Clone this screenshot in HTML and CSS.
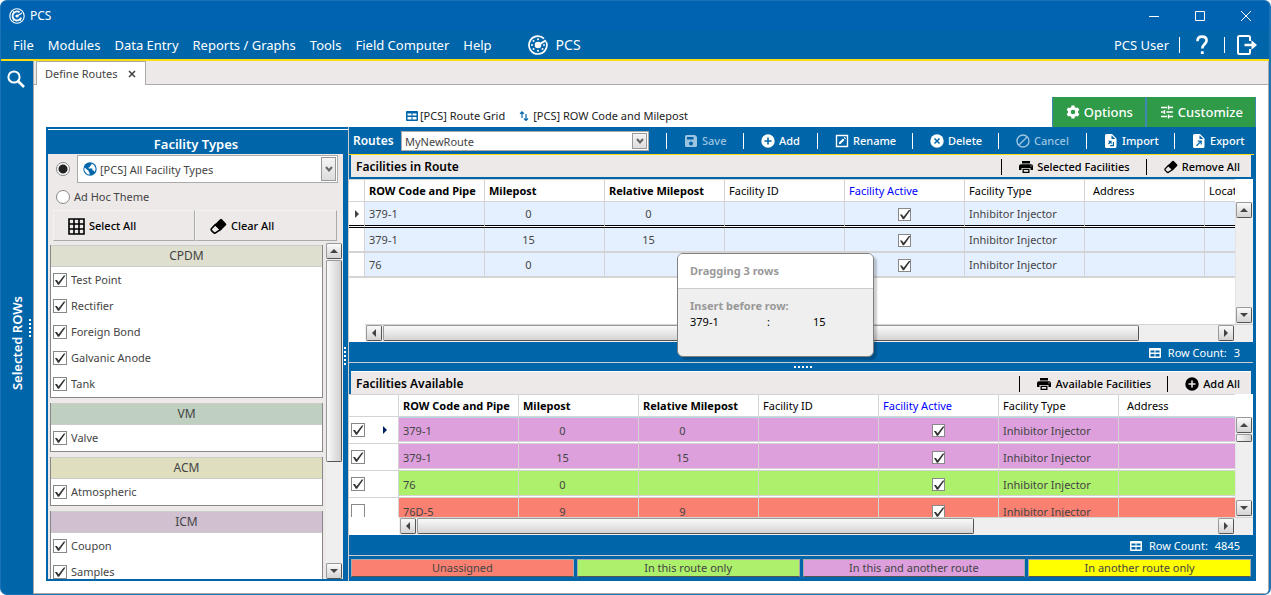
FILE: index.html
```html
<!DOCTYPE html>
<html lang="en">
<head>
    <meta charset="UTF-8">
    <meta name="viewport" content="width=device-width, initial-scale=1.0">
    <title>PCS - Define Routes</title>

    <link rel="stylesheet" href="styles.css">
</head>
<body>
    <!-- shared icons -->
    <svg class="sprite" aria-hidden="true">
        <symbol id="i-grid" viewBox="0 0 12 10"><path fill="currentColor" fill-rule="evenodd" d="M1 0h10a1 1 0 0 1 1 1v8a1 1 0 0 1-1 1H1a1 1 0 0 1-1-1V1a1 1 0 0 1 1-1zM1.500 2.500v2h4v-2zM6.500 2.500v2h4v-2zM1.500 6v2.500h4V6zM6.500 6v2.500h4V6z"/></symbol>
        <symbol id="i-eraser" viewBox="0 0 16 16"><path fill="currentColor" d="M9.500 1.200a1.200 1.200 0 0 1 1.700 0l3.800 3.900a1.200 1.200 0 0 1 0 1.700L10 11.700 4.500 6.200z"/><path fill="none" stroke="currentColor" stroke-width="1.500" d="M5 6.200 1.500 9.900a1.500 1.500 0 0 0 0 2l1.900 1.900c.6.6 1.500.6 2.100 0L9.800 11z"/></symbol>
        <symbol id="i-print" viewBox="0 0 14 12"><path fill="currentColor" fill-rule="evenodd" d="M3 0h8v2.500H3zM2 3.200h10a2 2 0 0 1 2 2V9h-2.500V7h-9v2H0V5.200a2 2 0 0 1 2-2zM11.500 4.500v1h1v-1zM3.500 7.800h7V12h-7zM4.800 9v1.800h4.400V9z"/></symbol>
        <symbol id="i-plus" viewBox="0 0 14 14"><path fill="currentColor" fill-rule="evenodd" d="M7 .3a6.700 6.700 0 1 1 0 13.400A6.700 6.700 0 0 1 7 .3zM6.200 3.500v2.700H3.500v1.600h2.700v2.700h1.600V7.800h2.700V6.200H7.800V3.500z"/></symbol>
        <symbol id="i-file-in" viewBox="0 0 12 14"><path fill="currentColor" fill-rule="evenodd" d="M1.500 0H7l4.500 4.500v8A1.500 1.500 0 0 1 10 14H1.500A1.500 1.500 0 0 1 0 12.500v-11A1.500 1.500 0 0 1 1.500 0zM6.500 1.200V5h3.800zM3 6.800l1.300 1.300L3 9.400l1 1 1.300-1.300 1.300 1.300V6.800zM5 11v1.200h4V8H7.800v3z"/></symbol>
        <symbol id="i-file-out" viewBox="0 0 12 14"><path fill="currentColor" fill-rule="evenodd" d="M1.500 0H7l4.500 4.500v8A1.500 1.500 0 0 1 10 14H1.500A1.500 1.500 0 0 1 0 12.500v-11A1.500 1.500 0 0 1 1.500 0zM6.500 1.200V5h3.800zM4.800 6.500v1.200h2L3 11.200l1 1 3.600-3.600v2h1.200V6.500z"/></symbol>
    </svg>

    <div class="window">
        <header class="titlebar">
            <svg class="app-icon" viewBox="0 0 16 16" fill="none" stroke="#fff"><circle cx="8" cy="8" r="7.200" stroke-width="1.100"/><path stroke-width="1.800" d="M12.200 9.600A4.500 4.500 0 1 1 10.600 4.300"/><circle cx="8" cy="8" r="1.600" fill="#fff" stroke="none"/><path stroke-width="1.200" d="m8 8 5-3M5.500 5 4 3.500M5.500 11 4 12.500M10.500 11l1.500 1.500"/></svg>
            <span class="app-name">PCS</span>
            <button class="win-button" aria-label="Minimize"><svg viewBox="0 0 12 12"><path d="M1 6.500h10"/></svg></button>
            <button class="win-button" aria-label="Maximize"><svg viewBox="0 0 12 12"><path d="M1.500 1.500h9v9h-9z"/></svg></button>
            <button class="win-button" aria-label="Close"><svg viewBox="0 0 12 12"><path d="m1 1 10 10M11 1 1 11"/></svg></button>
        </header>

        <nav class="menubar">
            <a href="#">File</a>
            <a href="#">Modules</a>
            <a href="#">Data Entry</a>
            <a href="#">Reports / Graphs</a>
            <a href="#">Tools</a>
            <a href="#">Field Computer</a>
            <a href="#">Help</a>
            <a href="#" class="brand">
                <svg viewBox="0 0 20 20"><path fill="none" stroke="#fff" stroke-width="1.700" d="M18.200 6.800A8.900 8.900 0 1 1 16 3.600"/><path stroke="#fff" stroke-width="2" d="m10 10 8-4.600"/><circle cx="10" cy="10" r="3.300" fill="#fff"/><g fill="#fff"><circle cx="10" cy="4.200" r="1"/><circle cx="5.500" cy="6" r="1"/><circle cx="4" cy="10" r="1"/><circle cx="5.500" cy="14" r="1"/><circle cx="10" cy="15.800" r="1"/><circle cx="14.500" cy="14" r="1"/><circle cx="16" cy="10" r=".9"/></g></svg>
                PCS
            </a>
            <span class="user">PCS User</span>
            <button class="menu-icon" aria-label="Help"><svg viewBox="0 0 12 20"><path fill="none" stroke="#fff" stroke-width="2.600" d="M1.500 6.200C1.500 3 3.300 1.600 6 1.600s4.600 1.500 4.600 4c0 3.300-4.300 3.700-4.300 8"/><path fill="#fff" d="M4.900 16.200h2.800V19H4.900z"/></svg></button>
            <button class="menu-icon" aria-label="Log out"><svg class="wide" viewBox="0 0 20 20"><path fill="none" stroke="#fff" stroke-width="2" d="M13 6V2.500A1.500 1.500 0 0 0 11.500 1h-9A1.500 1.500 0 0 0 1 2.500v15A1.500 1.500 0 0 0 2.500 19h9a1.500 1.500 0 0 0 1.500-1.500V14"/><path fill="#fff" d="M7.500 8.700h7V5.300L20 10l-5.500 4.700v-3.400h-7z"/></svg></button>
        </nav>

        <div class="workspace">
            <aside class="rail">
                <button class="rail-search" aria-label="Search"><svg viewBox="0 0 18 18" fill="none" stroke="#fff"><circle cx="7" cy="7" r="5.600" stroke-width="2"/><path stroke-width="2.600" d="m11 11 6 6"/></svg></button>
                <span class="rail-label">Selected ROWs</span>
                <span class="dots dots-v rail-dots"></span>
            </aside>

            <main class="document">
                <div class="tabs">
                    <div class="tab">Define Routes <button aria-label="Close tab"><svg viewBox="0 0 8 8"><path fill="none" stroke="#444" stroke-width="1.600" d="m1 1 6 6M7 1 1 7"/></svg></button></div>
                </div>

                <div class="page">
                    <div class="page-top">
                        <a href="#" class="layout-link"><svg class="i12"><use href="#i-grid"/></svg>[PCS] Route Grid</a>
                        <a href="#" class="layout-link sort"><svg class="i10" viewBox="0 0 10 12"><path fill="none" stroke="#0065a9" stroke-width="1.200" d="M3 8V2M1 3.800l2-2 2 2M7 4v6.500M5 8.500l2 2 2-2"/></svg>[PCS] ROW Code and Milepost</a>
                        <div class="page-buttons">
                            <button class="green"><svg viewBox="0 0 14 14"><path fill="#fff" fill-rule="evenodd" d="M5.500.5h3l.4 1.800 1.200.7 1.800-.6 1.500 2.600L12 6.300v1.400l1.400 1.300-1.500 2.600-1.800-.6-1.200.7-.4 1.800h-3l-.4-1.800-1.200-.7-1.800.6L.6 9 2 7.700V6.300L.6 5l1.500-2.600 1.800.6 1.200-.7zM7 4.700a2.300 2.300 0 1 0 0 4.600 2.300 2.300 0 0 0 0-4.600z"/></svg>Options</button>
                            <button class="green"><svg viewBox="0 0 14 14"><path fill="none" stroke="#fff" stroke-width="1.400" d="M1 2.500h6M9 2.500h4M8.500.5v4M1 7h3M6.500 7H13M4.500 5v4M1 11.500h6M9 11.500h4M8.500 9.500v4"/></svg>Customize</button>
                        </div>
                    </div>

                    <div class="panels">
                        <section class="types">
                            <h2>Facility Types</h2>
                            <div class="types-body">
                                <div class="theme-row">
                                    <input type="radio" name="theme" id="theme-all" aria-label="Facility type list" checked>
                                    <div class="combo combo-types">
                                        <svg class="globe" viewBox="0 0 14 14"><circle cx="7" cy="7" r="6.700" fill="#0065a9"/><path fill="#fff" d="M1.500 5.500 5.800 9v1l.8 1v1.700A5.800 5.800 0 0 1 1.500 5.500zM8.500 1.500v1.200L7 4v1.200H5.600v1.300h3.800v2h1.400l.8 1.600A5.800 5.800 0 0 0 8.500 1.500z"/></svg>
                                        <select aria-label="Facility types"><option>[PCS] All Facility Types</option></select>
                                        <span class="combo-arrow"><svg viewBox="0 0 8 8"><path d="m1 2 3 3.500L7 2"/></svg></span>
                                    </div>
                                </div>
                                <div class="theme-row">
                                    <input type="radio" name="theme" id="theme-adhoc">
                                    <label for="theme-adhoc">Ad Hoc Theme</label>
                                </div>
                                <div class="pick-row">
                                    <button><svg viewBox="0 0 17 17"><path fill="none" stroke="#000" stroke-width="1.600" d="M1 1h15v15H1zM1 6h15M1 11h15M6 1v15M11 1v15"/></svg>Select All</button>
                                    <button><svg viewBox="0 0 16 16"><use href="#i-eraser"/></svg>Clear All</button>
                                </div>
                                <div class="types-scroll">
                                    <div class="groups">
                                        <fieldset class="group cpdm">
                                            <legend>CPDM</legend>
                                            <label><input type="checkbox" checked>Test Point</label>
                                            <label><input type="checkbox" checked>Rectifier</label>
                                            <label><input type="checkbox" checked>Foreign Bond</label>
                                            <label><input type="checkbox" checked>Galvanic Anode</label>
                                            <label><input type="checkbox" checked>Tank</label>
                                        </fieldset>
                                        <fieldset class="group vm">
                                            <legend>VM</legend>
                                            <label><input type="checkbox" checked>Valve</label>
                                        </fieldset>
                                        <fieldset class="group acm">
                                            <legend>ACM</legend>
                                            <label><input type="checkbox" checked>Atmospheric</label>
                                        </fieldset>
                                        <fieldset class="group icm">
                                            <legend>ICM</legend>
                                            <label><input type="checkbox" checked>Coupon</label>
                                            <label><input type="checkbox" checked>Samples</label>
                                        </fieldset>
                                    </div>
                                    <div class="vscroll">
                                        <button class="sb up" aria-label="Scroll up"></button>
                                        <span class="thumb thumb-types"></span>
                                        <button class="sb down" aria-label="Scroll down"></button>
                                    </div>
                                </div>
                            </div>
                            <span class="dots dots-v types-dots"></span>
                        </section>

                        <section class="routes">
                            <div class="toolbar">
                                <label for="route">Routes</label>
                                <div class="combo combo-route">
                                    <select id="route"><option>MyNewRoute</option></select>
                                    <span class="combo-arrow"><svg viewBox="0 0 8 8"><path d="m1 2 3 3.500L7 2"/></svg></span>
                                </div>
                                <div class="tools">
                                    <button disabled><svg viewBox="0 0 14 14"><path fill="currentColor" fill-rule="evenodd" d="M2.500 1H11l2 2v8.500a1.500 1.500 0 0 1-1.500 1.500h-9A1.500 1.500 0 0 1 1 11.500v-9A1.500 1.500 0 0 1 2.500 1zM3 3v2.500h6.500V3zM7 7.500a2 2 0 1 0 0 4 2 2 0 0 0 0-4z"/></svg>Save</button>
                                    <button><svg><use href="#i-plus"/></svg>Add</button>
                                    <button><svg viewBox="0 0 14 14"><path fill="none" stroke="currentColor" stroke-width="1.400" d="M1.500 1.500h11v11h-11z"/><path fill="currentColor" d="m4 8.500 4-4L9.500 6l-4 4H4zM8.700 3.800l.8-.8L11 4.500l-.8.8z"/></svg>Rename</button>
                                    <button><svg viewBox="0 0 14 14"><circle cx="7" cy="7" r="6.700" fill="currentColor"/><path fill="none" stroke="#0065a9" stroke-width="1.500" d="m4.500 4.500 5 5M9.500 4.500l-5 5"/></svg>Delete</button>
                                    <button disabled><svg viewBox="0 0 14 14"><path fill="none" stroke="currentColor" stroke-width="1.400" d="M7 1a6 6 0 1 1 0 12A6 6 0 0 1 7 1zM11 3 3 11"/></svg>Cancel</button>
                                    <button><svg><use href="#i-file-in"/></svg>Import</button>
                                    <button><svg><use href="#i-file-out"/></svg>Export</button>
                                </div>
                            </div>

                            <div class="grid-panel in-route">
                                <div class="caption">
                                    <h3>Facilities in Route</h3>
                                    <button><svg><use href="#i-print"/></svg>Selected Facilities</button>
                                    <button><svg><use href="#i-eraser"/></svg>Remove All</button>
                                </div>
                                <div class="grid">
                                    <div class="grid-view">
                                        <table>
                                            <colgroup><col class="c-mark"><col span="8"></colgroup>
                                            <thead>
                                                <tr><th></th><th class="key">ROW Code and Pipe</th><th class="key">Milepost</th><th class="key">Relative Milepost</th><th>Facility ID</th><th class="active">Facility Active</th><th>Facility Type</th><th class="address">Address</th><th>Location</th></tr>
                                            </thead>
                                            <tbody>
                                                <tr class="drop-after"><td class="mark"><span class="caret"></span></td><td>379-1</td><td class="num">0</td><td class="num">0</td><td></td><td class="check"><input type="checkbox" aria-label="Facility active" checked></td><td>Inhibitor Injector</td><td></td><td></td></tr>
                                                <tr><td class="mark"></td><td>379-1</td><td class="num">15</td><td class="num">15</td><td></td><td class="check"><input type="checkbox" aria-label="Facility active" checked></td><td>Inhibitor Injector</td><td></td><td></td></tr>
                                                <tr><td class="mark"></td><td>76</td><td class="num">0</td><td class="num"></td><td></td><td class="check"><input type="checkbox" aria-label="Facility active" checked></td><td>Inhibitor Injector</td><td></td><td></td></tr>
                                            </tbody>
                                        </table>
                                    </div>
                                    <div class="vscroll">
                                        <button class="sb up" aria-label="Scroll up"></button>
                                        <button class="sb down" aria-label="Scroll down"></button>
                                    </div>
                                    <div class="hscroll">
                                        <button class="sb left" aria-label="Scroll left"></button>
                                        <span class="thumb thumb-route"></span>
                                        <button class="sb right" aria-label="Scroll right"></button>
                                    </div>
                                </div>
                                <div class="count"><svg><use href="#i-grid"/></svg>Row Count:<span>3</span></div>

                                <div class="drag-tip" role="tooltip">
                                    <div class="drag-title">Dragging 3 rows</div>
                                    <div class="drag-body">
                                        <strong>Insert before row:</strong>
                                        <div class="drag-target"><span>379-1</span><span>:</span><span>15</span></div>
                                    </div>
                                </div>
                            </div>

                            <div class="splitter"><span class="dots"></span></div>

                            <div class="grid-panel available">
                                <div class="caption">
                                    <h3>Facilities Available</h3>
                                    <button><svg><use href="#i-print"/></svg>Available Facilities</button>
                                    <button><svg><use href="#i-plus"/></svg>Add All</button>
                                </div>
                                <div class="grid">
                                    <div class="grid-view">
                                        <table>
                                            <colgroup><col class="c-mark"><col span="7"></colgroup>
                                            <thead>
                                                <tr><th></th><th class="key">ROW Code and Pipe</th><th class="key">Milepost</th><th class="key">Relative Milepost</th><th>Facility ID</th><th class="active">Facility Active</th><th>Facility Type</th><th class="address">Address</th></tr>
                                            </thead>
                                            <tbody>
                                                <tr class="both current"><td class="mark"><input type="checkbox" aria-label="Select row" checked><span class="caret"></span></td><td>379-1</td><td class="num">0</td><td class="num">0</td><td></td><td class="check"><input type="checkbox" aria-label="Facility active" checked></td><td>Inhibitor Injector</td><td></td></tr>
                                                <tr class="both"><td class="mark"><input type="checkbox" aria-label="Select row" checked></td><td>379-1</td><td class="num">15</td><td class="num">15</td><td></td><td class="check"><input type="checkbox" aria-label="Facility active" checked></td><td>Inhibitor Injector</td><td></td></tr>
                                                <tr class="this"><td class="mark"><input type="checkbox" aria-label="Select row" checked></td><td>76</td><td class="num">0</td><td class="num"></td><td></td><td class="check"><input type="checkbox" aria-label="Facility active" checked></td><td>Inhibitor Injector</td><td></td></tr>
                                                <tr class="none"><td class="mark"><input type="checkbox" aria-label="Select row"></td><td>76D-5</td><td class="num">9</td><td class="num">9</td><td></td><td class="check"><input type="checkbox" aria-label="Facility active" checked></td><td>Inhibitor Injector</td><td></td></tr>
                                            </tbody>
                                        </table>
                                    </div>
                                    <div class="vscroll">
                                        <button class="sb up" aria-label="Scroll up"></button>
                                        <span class="thumb thumb-short"></span>
                                        <button class="sb down" aria-label="Scroll down"></button>
                                    </div>
                                    <div class="hscroll">
                                        <button class="sb left" aria-label="Scroll left"></button>
                                        <span class="thumb thumb-available"></span>
                                        <button class="sb right" aria-label="Scroll right"></button>
                                    </div>
                                </div>
                                <div class="count"><svg><use href="#i-grid"/></svg>Row Count:<span>4845</span></div>
                            </div>

                            <div class="key-row">
                                <span class="none">Unassigned</span>
                                <span class="this">In this route only</span>
                                <span class="both">In this and another route</span>
                                <span class="other">In another route only</span>
                            </div>
                        </section>
                    </div>
                </div>
            </main>
        </div>
    </div>
</body>
</html>
```
FILE: styles.css
```css
* {
    box-sizing: border-box;
}

body {
    margin: 0;
    background: #fff;
    color: #444;
    font-family: "Noto Sans", "Open Sans", sans-serif;
    font-size: 11px;
    line-height: 16px;
}

button, select, input {
    font: inherit;
    color: inherit;
    margin: 0;
}

button {
    display: flex;
    align-items: center;
    background: none;
    border: 0;
    padding: 0;
    white-space: nowrap;
}

a {
    color: inherit;
    text-decoration: none;
}

h2, h3 {
    margin: 0;
    font-weight: 600;
}

svg {
    flex: none;
}

.sprite {
    display: none;
}

.window {
    display: flex;
    flex-direction: column;
    height: 100vh;
    background: #0065a9;
    border: 1px solid #1b72b4;
    border-right-width: 2px;
    border-radius: 7px;
    overflow: hidden;
}

/* title bar and menu */
.titlebar {
    display: flex;
    align-items: center;
    flex: none;
    height: 29px;
    padding-left: 8px;
    background: #0063b1;
    color: #fff;
    font-size: 12px;
}

.app-icon {
    width: 16px;
    height: 16px;
}

.app-name {
    margin: 0 auto 0 5px;
}

.win-button {
    justify-content: center;
    width: 46px;
    height: 29px;
}

.win-button svg {
    width: 12px;
    height: 12px;
    fill: none;
    stroke: #fff;
}

.menubar {
    display: flex;
    align-items: center;
    flex: none;
    height: 31px;
    padding: 1px 12px 0;
    gap: 14px;
    border-bottom: 2px solid #fbdd12;
    color: #fff;
    font-size: 13px;
    white-space: nowrap;
}

.brand {
    display: flex;
    align-items: center;
    gap: 8px;
    margin-left: 22px;
    font-size: 14px;
}

.brand svg {
    width: 20px;
    height: 20px;
}

.user {
    margin-left: auto;
}

.menu-icon {
    height: 16px;
    padding-left: 16px;
    border-left: 1px solid #fff;
    margin-left: -4px;
}

.menu-icon svg {
    width: 12px;
    height: 20px;
}

.menu-icon:last-child {
    padding-left: 12px;
    margin-left: 2px;
}

.menu-icon .wide {
    width: 20px;
}

/* left rail */
.workspace {
    display: flex;
    flex: 1;
    min-height: 0;
}

.rail {
    display: flex;
    flex-direction: column;
    align-items: center;
    justify-content: center;
    position: relative;
    flex: none;
    width: 32px;
    color: #fff;
}

.rail-search {
    position: absolute;
    top: 9px;
    left: 6px;
}

.rail-search svg {
    width: 18px;
    height: 18px;
}

.rail-label {
    padding-bottom: 32px;
    writing-mode: vertical-rl;
    transform: rotate(180deg);
    font-size: 13px;
    font-weight: 600;
}

.dots {
    width: 18px;
    height: 2px;
    background: repeating-linear-gradient(90deg, #fff 0 2px, transparent 2px 4px);
}

.dots-v {
    position: absolute;
    width: 2px;
    height: 18px;
    background: repeating-linear-gradient(#fff 0 2px, transparent 2px 4px);
}

.rail-dots {
    right: 2px;
}

/* document area */
.document {
    display: flex;
    flex-direction: column;
    flex: 1;
    min-width: 0;
    border: solid #aaa;
    border-width: 0 1px 1px;
    background: #fff;
}

.tabs {
    flex: none;
    height: 24px;
    padding-left: 2px;
    background: #ece9e8;
    border-bottom: 1px solid #aaa;
}

.tab {
    display: flex;
    align-items: center;
    justify-content: space-between;
    width: 110px;
    height: 24px;
    padding: 0 9px 0 8px;
    background: #fff;
    border: solid #aaa;
    border-width: 1px 1px 0;
}

.tab svg {
    width: 8px;
    height: 8px;
}

.page {
    display: flex;
    flex-direction: column;
    flex: 1;
    min-height: 0;
    padding: 12px 12px 12px 12px;
}

.page-top {
    display: flex;
    flex: none;
    height: 30px;
    padding: 11px 0 0 360px;
    color: #222;
}

.layout-link {
    display: flex;
    align-items: center;
    gap: 2px;
    height: 16px;
}

.layout-link svg {
    color: #0065a9;
}

.sort {
    margin-left: 14px;
    gap: 4px;
}

.i12 {
    width: 12px;
    height: 10px;
}

.i10 {
    width: 10px;
    height: 12px;
}

.page-buttons {
    display: flex;
    margin: -11px 0 0 auto;
}

.green {
    gap: 4px;
    height: 30px;
    padding: 0 12px 0 13px;
    background: #2f9a47;
    border: solid #3f87b5;
    border-width: 0 1px;
    color: #fff;
    font-size: 13px;
    font-weight: 500;
}

.green svg {
    width: 14px;
    height: 14px;
}

.panels {
    display: flex;
    flex: 1;
    min-height: 0;
    background: #0065a9;
}

/* facility types */
.types {
    display: flex;
    flex-direction: column;
    position: relative;
    flex: none;
    width: 302px;
    padding: 2px 0 2px 2px;
}

.types h2 {
    flex: none;
    height: 25px;
    padding-right: 4px;
    border-top: 1px solid #fff;
    color: #fff;
    font-size: 13px;
    line-height: 29px;
    text-align: center;
}

.types-body {
    display: flex;
    flex-direction: column;
    flex: 1;
    min-height: 0;
    margin-right: 5px;
    background: #ece9e8;
}

.types-dots {
    top: 220px;
    right: 2px;
}

.theme-row {
    display: flex;
    align-items: center;
    flex: none;
    gap: 7px;
    height: 29px;
    padding: 1px 5px 0 8px;
}

.theme-row + .theme-row {
    gap: 4px;
    height: 26px;
    padding-top: 1px;
}

input[type=radio] {
    appearance: none;
    flex: none;
    width: 14px;
    height: 14px;
    border: 1px solid #888;
    border-radius: 50%;
    background: #fff;
}

input[type=radio]:checked {
    background: radial-gradient(#222 4px, #fff 5px);
}

.combo {
    display: flex;
    align-items: center;
    position: relative;
    background: #fff;
    border: 1px solid #aaa;
}

.combo select {
    appearance: none;
    width: 100%;
    height: 100%;
    padding: 1px 20px 0 3px;
    border: 0;
    background: none;
}

.combo-arrow {
    display: flex;
    align-items: center;
    justify-content: center;
    position: absolute;
    top: 1px;
    right: 1px;
    bottom: 1px;
    width: 15px;
    background: linear-gradient(#f4f4f4, #ddd);
    border: 1px solid #999;
    pointer-events: none;
}

.combo-arrow svg {
    width: 8px;
    height: 8px;
    fill: none;
    stroke: #666;
    stroke-width: 2;
}

.combo-types {
    flex: 1;
    height: 28px;
    padding-left: 5px;
}

.globe {
    width: 14px;
    height: 14px;
}

.pick-row {
    display: flex;
    flex: none;
    height: 31px;
    margin: 1px 6px 0 5px;
}

.pick-row button {
    flex: 1;
    gap: 4px;
    padding: 1px 0 0 14px;
    border: 1px solid #f4f2f2;
    border-right-color: #aaa;
    border-bottom-color: #aaa;
    color: #000;
    font-weight: 500;
}

.pick-row svg {
    width: 17px;
    height: 17px;
}

.types-scroll {
    display: flex;
    flex: 1;
    min-height: 0;
    padding: 2px 0 0 2px;
}

.groups {
    flex: 1;
    padding-top: 2px;
    overflow: hidden;
}

.group {
    margin: 0 0 5px;
    padding: 0;
    border: solid #888;
    border-width: 0 1px 1px;
    background: #fff;
}

.group legend {
    float: left;
    width: 100%;
    height: 22px;
    padding: 0;
    border: solid #ccc;
    border-width: 1px 0;
    font-size: 12px;
    line-height: 20px;
    text-align: center;
}

.group label {
    display: flex;
    align-items: center;
    clear: both;
    gap: 4px;
    height: 26px;
    padding-left: 2px;
}

.cpdm legend { background: #dfdfcf; }
.vm legend { background: #bfcfc0; }
.acm legend { background: #dfdfbf; }
.icm legend { background: #d0c0d0; }

input[type=checkbox] {
    appearance: none;
    display: block;
    flex: none;
    width: 14px;
    height: 14px;
    border: 1px solid #888;
    background: #fff;
}

input[type=checkbox]:checked::before {
    content: "";
    display: block;
    width: 12px;
    height: 12px;
    background: #333;
    clip-path: polygon(8% 50%, 25% 50%, 38% 68%, 82% 12%, 96% 12%, 42% 90%, 32% 90%);
}

/* scroll bars */
.vscroll {
    display: flex;
    flex-direction: column;
    flex: none;
    width: 17px;
    margin-left: 3px;
    background: #efefef;
}

.hscroll {
    display: flex;
    gap: 1px;
    padding: 0 1px;
    background: #efefef;
    border-top: 1px solid #d4d4d4;
}

.sb, .thumb {
    flex: none;
    border: 1px solid #999;
    border-right-color: #555;
    border-bottom-color: #555;
    border-radius: 2px;
    background: linear-gradient(#fafafa, #d4d4d4);
}

.sb {
    justify-content: center;
    width: 16px;
    height: 16px;
}

.sb::before {
    content: "";
    border: 4px solid transparent;
}

.up::before {
    border-top: 0;
    border-bottom-color: #444;
}

.down::before {
    border-bottom: 0;
    border-top-color: #444;
}

.left::before {
    border-left: 0;
    border-right-color: #444;
}

.right::before {
    border-right: 0;
    border-left-color: #444;
}

.down {
    margin-top: auto;
}

.right {
    margin-left: auto;
}

.vscroll .thumb {
    width: 16px;
    margin-top: 1px;
    background: linear-gradient(90deg, #fafafa, #d0d0d0);
}

.thumb-types {
    height: 60%;
}

.thumb-short {
    height: 8px;
}

.thumb-route {
    width: 756px;
    height: 16px;
}

.thumb-available {
    width: 557px;
    height: 16px;
}

/* route toolbar */
.routes {
    display: flex;
    flex-direction: column;
    flex: 1;
    min-width: 0;
    border-left: 1px solid #ccc;
}

.toolbar {
    display: flex;
    align-items: center;
    flex: none;
    height: 28px;
    margin-right: 2px;
    padding: 1px 0 0 4px;
    border-bottom: 1px solid #fbdd12;
    color: #fff;
}

.toolbar label {
    width: 48px;
    font-size: 12px;
    font-weight: 600;
}

.combo-route {
    width: 248px;
    height: 20px;
    color: #444;
}

.tools {
    display: grid;
    grid-template-columns: 77px 74px 95px 86px 88px 88px 80px;
    margin-left: auto;
}

.tools button {
    gap: 4px;
    height: 16px;
    padding-left: 17px;
    border-left: 1px solid #fff;
    font-weight: 500;
}

.tools button:disabled {
    color: #9cc4e0;
}

.tools svg, .caption svg {
    width: 14px;
    height: 14px;
}

/* grids */
.grid-panel {
    display: flex;
    flex-direction: column;
    position: relative;
    min-height: 0;
    margin-right: 3px;
}

.in-route {
    flex: 1 1 208px;
}

.available {
    flex: 1 1 185px;
}

.caption {
    display: flex;
    align-items: center;
    flex: none;
    height: 24px;
    margin: 0 2px;
    padding: 1px 11px 0 5px;
    background: #ece9e8;
    border-bottom: 2px solid #0065a9;
    color: #000;
}

.caption h3 {
    margin-right: auto;
    font-size: 12px;
}

.caption button {
    gap: 4px;
    height: 16px;
    padding-left: 17px;
    border-left: 1px solid #000;
    margin-left: 16px;
    font-weight: 500;
}

.available .caption {
    height: 23px;
    border-bottom: 0;
    border-top: 1px solid #fff;
}

.grid {
    display: grid;
    grid-template-columns: minmax(0, 1fr) 18px;
    grid-template-rows: minmax(0, 1fr) 18px;
    flex: 1;
    min-height: 0;
    background: #fff;
}

.grid-view {
    overflow: hidden;
    border-top: 1px solid #d4d4d4;
}

.grid .vscroll {
    width: 18px;
    margin: 0;
    padding: 0 0 1px 1px;
    border-top: 23px solid #fff;
    box-shadow: inset 1px 1px #e4e4e4;
}

.grid .hscroll {
    grid-column: 1 / 3;
    margin-left: 16px;
    padding-right: 19px;
}

.available .hscroll {
    margin-left: 50px;
}

table {
    width: 976px;
    table-layout: fixed;
    border-collapse: separate;
    border-spacing: 0;
}

.available table {
    width: 890px;
}

.c-mark {
    width: 16px;
}

.available .c-mark {
    width: 50px;
}

th, td {
    padding: 0 4px;
    border: solid #d4d4d4;
    border-width: 0 1px 1px 0;
    overflow: hidden;
    white-space: nowrap;
}

th {
    height: 22px;
    color: #000;
    font-weight: 400;
    text-align: left;
}

.key {
    font-weight: 700;
}

.active {
    color: #00f;
}

.address {
    padding-left: 8px;
}

td {
    height: 25px;
    padding-top: 1px;
    background: #e4f0ff;
    border-bottom-width: 2px;
}

.drop-after td {
    height: 26px;
    border-bottom: 3px double #000;
    background-clip: padding-box;
}

.num {
    padding-right: 36px;
    text-align: center;
}

.check input {
    width: 13px;
    height: 13px;
    margin: 0 auto;
}

td.mark {
    padding: 0 2px;
    background: #fff;
}

.caret {
    display: block;
    width: 0;
    margin-left: 4px;
    border: 4px solid transparent;
    border-left-color: #444;
    border-right: 0;
}

.available td {
    height: 27px;
    padding-top: 3px;
    border-bottom: 3px double #d4d4d4;
    background-clip: padding-box;
}

.available td.mark {
    padding-top: 0;
    border-bottom: 1px solid #d4d4d4;
}

.available .mark input {
    float: left;
}

.available .caret {
    float: left;
    margin: 3px 0 0 18px;
    border-left-color: #002060;
}

.both td, span.both { background-color: #dda0dd; }
.this td, span.this { background-color: #adf06c; }
.none td, span.none { background-color: #fa8072; }
span.other { background-color: #ff0; }

.available .current td {
    box-shadow: inset 0 1px #add8e6;
}

.available td.mark {
    background-color: #fff;
    box-shadow: none;
}

.count {
    display: flex;
    align-items: center;
    justify-content: flex-end;
    flex: none;
    gap: 7px;
    height: 21px;
    padding: 1px 13px 0 0;
    border-bottom: 1px solid #ccc;
    color: #fff;
}

.count svg {
    width: 12px;
    height: 10px;
}

.splitter {
    display: flex;
    align-items: center;
    justify-content: center;
    flex: none;
    height: 8px;
}

.key-row {
    display: grid;
    grid-template-columns: repeat(4, 1fr);
    flex: none;
    gap: 3px;
    height: 25px;
    padding: 3px 5px 5px 2px;
}

.key-row span {
    border: 1px solid #aaa;
    border-bottom-color: #555;
    line-height: 16px;
    text-align: center;
}

/* drag feedback */
.drag-tip {
    position: absolute;
    top: 98px;
    left: 328px;
    width: 197px;
    height: 104px;
    background: #efefef;
    border: 1px solid #808080;
    border-radius: 6px;
    box-shadow: 3px 3px 2px rgba(0, 0, 0, .2);
    color: #999;
    overflow: hidden;
}

.drag-title {
    height: 35px;
    padding-left: 12px;
    background: #fff;
    border-bottom: 1px solid #ccc;
    font-weight: 700;
    line-height: 34px;
}

.drag-body {
    padding: 9px 12px;
}

.drag-body strong {
    font-weight: 700;
}

.drag-target {
    display: grid;
    grid-template-columns: 77px 46px 1fr;
    color: #000;
}
```
